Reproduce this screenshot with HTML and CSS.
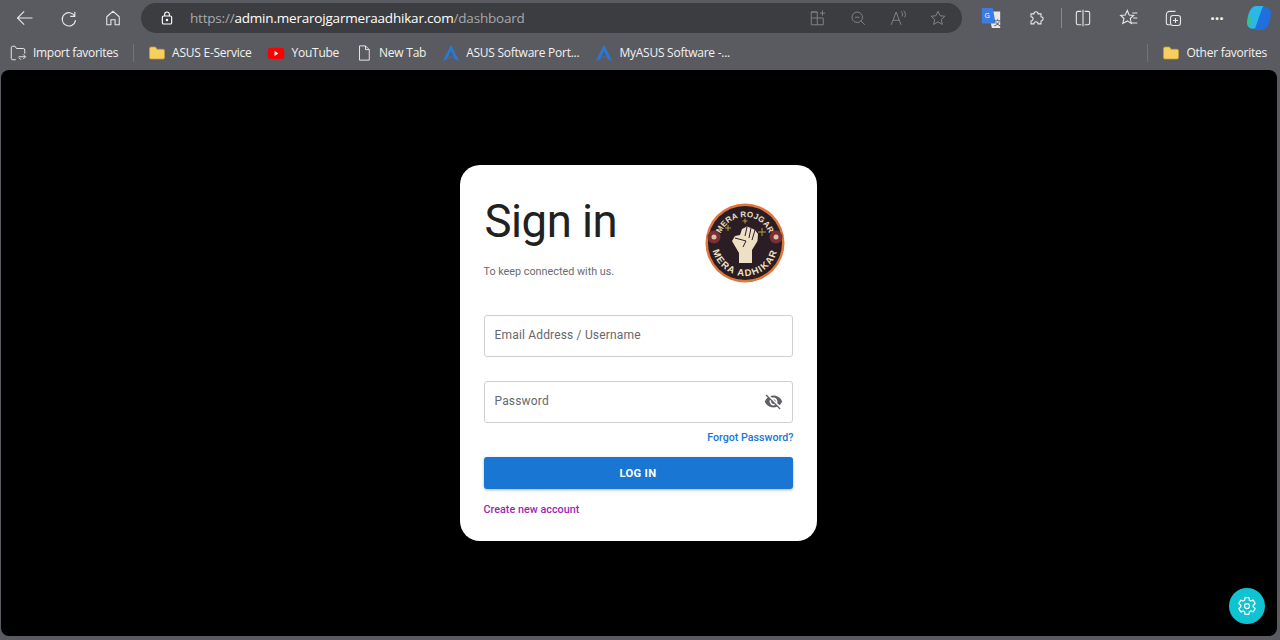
FILE: index.html
```html
<!DOCTYPE html>
<html lang="en">

<head>
  <meta charset="UTF-8">
  <meta name="viewport" content="width=device-width, initial-scale=1.0">
  <title>Sign in</title>
  <link rel="stylesheet" href="styles.css">
</head>

<body>
  <header class="toolbar">
    <div class="nav-buttons">
      <svg class="icon" viewBox="0 0 24 24"><path d="M21 12H3M11 4 3 12l8 8" /></svg>
      <svg class="icon" viewBox="0 0 24 24"><path d="M19 4.500V10h-5.500M19 10a8 8 0 1 0 .8 4.500" /></svg>
      <svg class="icon" viewBox="0 0 24 24"><path d="M4.500 10.500 12 4l7.500 6.500V20h-5v-6h-5v6h-5z" /></svg>
    </div>
    <div class="address">
      <svg class="icon lock" viewBox="0 0 24 24"><rect x="5" y="9" width="14" height="12" rx="2" /><path d="M8.500 9V6.500a3.500 3.500 0 0 1 7 0V9" /><circle cx="12" cy="15" r="1" /></svg>
      <span class="url">https://<b>admin.merarojgarmeraadhikar.com</b>/dashboard</span>
      <div class="address-tools">
        <svg class="icon" viewBox="0 0 24 24"><path d="M3 12h16v9H3zM11 4v17M3 12V4h8M3 4h8M18 2v7M14.500 5.500h7" /></svg>
        <svg class="icon" viewBox="0 0 24 24"><circle cx="11" cy="11" r="7" /><path d="M16 16l5 5M8 11h6" /></svg>
        <svg class="icon" viewBox="0 0 24 24"><path d="M3 21 9.500 4 16 21M5.500 15h8M16 3c2 1.500 2.500 4.500 1.500 7M19.500 2c2.500 2 3 6 1.500 9" /></svg>
        <svg class="icon" viewBox="0 0 24 24"><path d="m12 3 2.800 6 6.400.7-4.800 4.300 1.400 6.500-5.800-3.300-5.800 3.300L7.600 14 2.800 9.700 9.200 9z" /></svg>
      </div>
    </div>
    <div class="ext-buttons">
      <svg class="ext translate" viewBox="0 0 24 24">
        <path class="tr-back" d="M9 5h13v18H13z" />
        <path class="tr-front" d="M2 1h12l3 17H2z" />
        <text x="5" y="12" class="tr-g">G</text>
        <text x="15" y="20" class="tr-z">文</text>
      </svg>
      <svg class="icon" viewBox="0 0 24 24"><path d="M6 7h3.500a2.500 2.500 0 1 1 5 0H18v3.500a2.500 2.500 0 1 1 0 5V19h-3.500a2.500 2.500 0 1 0-5 0H6v-3.500a2.500 2.500 0 1 0 0-5z" /></svg>
      <span class="divider"></span>
      <svg class="icon" viewBox="0 0 24 24"><path d="M10 4H6a2 2 0 0 0-2 2v12a2 2 0 0 0 2 2h4M14 4h4a2 2 0 0 1 2 2v12a2 2 0 0 1-2 2h-4M12 2v20" /></svg>
      <svg class="icon fav" viewBox="0 0 24 24"><path d="m10 3 2.200 5.500 5.300.4-4 3.700 1.200 5.900-4.700-3-5.500 3 1.500-5.900-4-3.700 5.500-.4zM16 6h6M17 12h5M15 18h7" /></svg>
      <svg class="icon" viewBox="0 0 24 24"><path d="M9 20H6a2 2 0 0 1-2-2V8a4 4 0 0 1 4-4h7" /><rect x="9" y="9" width="12" height="12" rx="3" /><path d="M15 12v6M12 15h6" /></svg>
      <span class="dots">···</span>
      <svg class="ext copilot" viewBox="0 0 24 24">
        <path fill="#2bb7e8" d="M9 1h7L9 21c-1 2-8 1-8-4C1 10 4 1 9 1z" />
        <path fill="#1f6fe0" d="M15 23H8l7-20c1-2 8-1 8 4 0 7-3 16-8 16z" />
        <path fill="#35c48d" d="M2 11l4-1-2 9-3-2z" />
      </svg>
    </div>
  </header>

  <nav class="bookmarks">
    <a class="bookmark tight">
      <svg class="icon" viewBox="0 0 24 24"><path d="M9 21H5a2 2 0 0 1-2-2V5a2 2 0 0 1 2-2h3l2 3h9a2 2 0 0 1 2 2v5M13 17h9M19 14l3 3-3 3M16 21l-3-3" /></svg>
      Import favorites
    </a>
    <span class="bookmark-divider"></span>
    <a class="bookmark">
      <svg class="folder" viewBox="0 0 24 24"><path d="M2 6a2 2 0 0 1 2-2h6l2 3h8a2 2 0 0 1 2 2v9a2 2 0 0 1-2 2H4a2 2 0 0 1-2-2z" /></svg>
      ASUS E-Service
    </a>
    <a class="bookmark">
      <svg class="site" viewBox="0 0 24 24"><rect x="1" y="5" width="22" height="15" rx="4" fill="#f00" /><path d="m10 9 5 3.500-5 3.500z" fill="#fff" /></svg>
      YouTube
    </a>
    <a class="bookmark">
      <svg class="icon" viewBox="0 0 24 24"><path d="M6 2.500h8l5 5V21.500H6zM14 2.500v5h5" /></svg>
      New Tab
    </a>
    <a class="bookmark">
      <svg class="site" viewBox="0 0 24 24"><path d="M12 1 1 23l11-6 11 6zM12 9l-5 10 5-3 5 3z" fill="#2a78d8" fill-rule="evenodd" /></svg>
      ASUS Software Port...
    </a>
    <a class="bookmark">
      <svg class="site" viewBox="0 0 24 24"><path d="M12 1 1 23l11-6 11 6zM12 9l-5 10 5-3 5 3z" fill="#2a78d8" fill-rule="evenodd" /></svg>
      MyASUS Software -...
    </a>
    <span class="bookmark-divider push"></span>
    <a class="bookmark">
      <svg class="folder" viewBox="0 0 24 24"><path d="M2 6a2 2 0 0 1 2-2h6l2 3h8a2 2 0 0 1 2 2v9a2 2 0 0 1-2 2H4a2 2 0 0 1-2-2z" /></svg>
      Other favorites
    </a>
  </nav>

  <main class="page">
    <section class="card">
      <div class="card-head">
        <div>
          <h1 class="title">Sign in</h1>
          <p class="subtitle">To keep connected with us.</p>
        </div>
        <svg class="logo" viewBox="0 0 80 80">
          <defs>
            <path id="logo-top" d="M14 40A26 26 0 0 1 66 40" />
            <path id="logo-bottom" d="M7 40A33 33 0 0 0 73 40" />
          </defs>
          <circle cx="40" cy="40" r="39.500" fill="#e0763a" />
          <circle cx="40" cy="40" r="37" fill="#2a1d24" />
          <text class="logo-text"><textPath href="#logo-top" startOffset="50%">MERA ROJGAR</textPath></text>
          <text class="logo-text big"><textPath href="#logo-bottom" startOffset="50%">MERA ADHIKAR</textPath></text>
          <path class="fist" d="M34 60V50L27 38l3-5 5-1 2-6 5-2.500 4 1.500 4 2 3 4-.5 7L47 47v13z" />
          <path class="fist-lines" d="M42 24l-2 9M46 25l-2 10M50 27l-3 10M30 35l11 3-3 6" />
          <circle class="badge" cx="9" cy="34" r="6.500" />
          <circle class="badge" cx="71" cy="34" r="6.500" />
          <circle class="badge-head" cx="9" cy="34" r="2.500" />
          <circle class="badge-head" cx="71" cy="34" r="2.500" />
          <path class="star" d="M23 22v6M20 25h6M40 15.500v5M37.500 18h5M57 25v8M53 29h8" />
        </svg>
      </div>

      <div class="field first">
        <span class="placeholder">Email Address / Username</span>
      </div>
      <div class="field">
        <span class="placeholder">Password</span>
        <svg class="eye" viewBox="0 0 24 24"><path d="M12 7c2.760 0 5 2.240 5 5 0 .65-.13 1.260-.36 1.830l2.920 2.920c1.510-1.260 2.700-2.890 3.430-4.750-1.730-4.390-6-7.500-11-7.500-1.400 0-2.740.25-3.980.7l2.160 2.160C10.740 7.130 11.350 7 12 7zM2 4.270l2.280 2.280.46.460C3.080 8.300 1.780 10.020 1 12c1.730 4.390 6 7.500 11 7.500 1.550 0 3.030-.3 4.380-.84l.42.420L19.730 22 21 20.730 3.270 3 2 4.270zM7.530 9.800l1.550 1.550c-.05.21-.08.430-.08.650 0 1.660 1.340 3 3 3 .22 0 .44-.03.650-.08l1.550 1.550c-.67.330-1.410.53-2.200.53-2.760 0-5-2.240-5-5 0-.79.200-1.530.53-2.200zm4.310-.780 3.150 3.150.020-.160c0-1.660-1.340-3-3-3l-.170.010z" /></svg>
      </div>
      <a class="forgot">Forgot Password?</a>
      <button class="login" type="button">LOG IN</button>
      <a class="create">Create new account</a>
    </section>

    <button class="settings" type="button">
      <svg viewBox="0 0 24 24"><path d="M19.430 12.980c.04-.32.070-.64.070-.98 0-.34-.03-.66-.07-.98l2.110-1.650c.19-.15.240-.42.120-.64l-2-3.460c-.12-.22-.39-.3-.61-.22l-2.490 1c-.52-.4-1.080-.73-1.690-.98l-.38-2.650C14.460 2.180 14.250 2 14 2h-4c-.25 0-.46.180-.49.420l-.38 2.650c-.61.250-1.170.59-1.690.98l-2.490-1c-.23-.09-.49 0-.61.220l-2 3.460c-.13.220-.07.490.12.640l2.110 1.650c-.04.320-.07.650-.07.980 0 .33.030.66.070.98l-2.110 1.650c-.19.150-.24.420-.12.640l2 3.460c.12.220.39.300.61.220l2.490-1c.52.400 1.080.730 1.690.980l.38 2.650c.03.240.24.420.49.420h4c.25 0 .46-.18.49-.42l.38-2.650c.61-.25 1.170-.59 1.690-.98l2.490 1c.23.090.49 0 .61-.22l2-3.460c.12-.22.070-.49-.12-.64l-2.110-1.650z" /><circle cx="12" cy="12" r="3" /></svg>
    </button>
  </main>
</body>

</html>
```
FILE: styles.css
```css
* {
  box-sizing: border-box;
  padding: 0;
  margin: 0;
}

html,
body {
  height: 100%;
}

body {
  display: flex;
  flex-direction: column;
  overflow: hidden;
  background-color: #5a5b60;
  font-family: 'Open Sans', sans-serif;
  color: #f2f2f2;
}

.icon {
  width: 20px;
  height: 20px;
  flex-shrink: 0;
  fill: none;
  stroke: #e8e8e8;
  stroke-width: 1.3;
}

/* browser toolbar */
.toolbar {
  display: flex;
  align-items: center;
  height: 35px;
  padding-top: 1px;
}

.nav-buttons {
  display: flex;
  gap: 24px;
  padding-left: 15px;
  width: 141px;
}

.address {
  display: flex;
  align-items: center;
  width: 821px;
  height: 30px;
  padding: 0 15px 0 18px;
  border-radius: 15px;
  background-color: #3c3d41;
}

.lock {
  width: 16px;
  height: 16px;
  margin-right: 15px;
  stroke: #fff;
  stroke-width: 1.7;
}

.url {
  font-size: 13.5px;
  color: #a8a9ab;
  letter-spacing: -0.2px;
}

.url b {
  font-weight: 400;
  color: #fff;
}

.address-tools {
  display: flex;
  gap: 22px;
  margin-left: auto;
}

.address-tools .icon {
  stroke: #828386;
  width: 18px;
  height: 18px;
}

.ext-buttons {
  display: flex;
  align-items: center;
  flex: 1;
  padding-left: 18px;
  gap: 24px;
}

.ext {
  width: 22px;
  height: 22px;
  flex-shrink: 0;
}

.tr-back {
  fill: #e8e8e8;
}

.tr-front {
  fill: #3f7be0;
}

.tr-g {
  font-size: 8px;
  fill: #fff;
}

.tr-z {
  font-size: 8px;
  fill: #444;
  font-family: 'Noto Sans CJK SC', sans-serif;
}

.divider {
  width: 1px;
  height: 20px;
  margin: 0 -13px 0 -9px;
  background-color: #88898c;
}

.fav {
  margin-left: 2px;
}

.dots {
  width: 20px;
  font-size: 16px;
  font-weight: 700;
  text-align: center;
}

.copilot {
  margin-left: -5px;
  width: 26px;
  height: 26px;
}

/* favorites bar */
.bookmarks {
  display: flex;
  align-items: center;
  height: 35px;
  padding: 0 13px 0 9px;
  font-size: 12px;
}

.bookmark {
  display: flex;
  align-items: center;
  gap: 6px;
  margin-right: 16px;
  white-space: nowrap;
  letter-spacing: -0.25px;
}

.bookmark.tight {
  margin-right: 15px;
  letter-spacing: -0.3px;
}

.bookmark:last-child {
  margin-right: 0;
}

.bookmark .icon {
  width: 18px;
  height: 18px;
}

.bookmark-divider {
  width: 1px;
  height: 18px;
  margin-right: 14px;
  background-color: #727377;
}

.push {
  margin-left: auto;
}

.folder {
  width: 18px;
  height: 18px;
  fill: #f6cf5f;
  stroke: #c79a34;
  stroke-width: 1;
}

.site {
  width: 18px;
  height: 18px;
}

/* page */
.page {
  position: relative;
  display: flex;
  flex-direction: column;
  align-items: center;
  height: 566px;
  margin: 0 3px 0 1px;
  padding: 95px 2px 0 0;
  border-radius: 8px;
  background-color: #000;
  font-family: Roboto, sans-serif;
}

.card {
  display: flex;
  flex-direction: column;
  width: 357px;
  height: 376px;
  padding: 24px;
  border-radius: 20px;
  background-color: #fff;
}

.card-head {
  display: flex;
  justify-content: space-between;
  height: 126px;
}

.title {
  margin: 1px 0 0 1px;
  font-size: 45.5px;
  font-weight: 400;
  line-height: 64px;
  color: #212121;
  letter-spacing: -0.5px;
}

.subtitle {
  margin-top: 11px;
  font-size: 10.8px;
  color: #6b6b70;
}

.logo {
  width: 80px;
  height: 80px;
  margin-top: 14px;
  margin-right: 8px;
}

.logo-text {
  font-family: 'Liberation Sans', sans-serif;
  font-size: 8px;
  font-weight: 700;
  letter-spacing: 0.2px;
  text-anchor: middle;
  fill: #eee0c4;
}

.logo-text.big {
  font-size: 9.5px;
  letter-spacing: 1.2px;
}

.fist {
  fill: #eee0c4;
}

.fist-lines {
  fill: none;
  stroke: #2a1d24;
}

.badge {
  fill: #7c3036;
}

.badge-head {
  fill: #d9c3a8;
}

.star {
  fill: none;
  stroke: #d8b64a;
  stroke-width: 0.8;
}

.field {
  display: flex;
  justify-content: space-between;
  align-items: center;
  height: 42px;
  margin-top: 24px;
  padding: 0 9px 0 10px;
  border: 1px solid #cfcfd2;
  border-radius: 3px;
}

.field.first {
  margin-top: 0;
}

.placeholder {
  margin-top: -3px;
  font-size: 12px;
  color: #67676c;
  letter-spacing: 0.17px;
}

.eye {
  width: 19px;
  height: 19px;
  margin-top: -2px;
  fill: #5f6064;
}

.forgot {
  align-self: flex-end;
  margin: 8px -1px 0 0;
  font-size: 10.7px;
  font-weight: 500;
  line-height: 14px;
  color: #1976d2;
}

.login {
  height: 32px;
  margin-top: 12px;
  border: none;
  border-radius: 3px;
  background-color: #1976d2;
  box-shadow: 0 1px 3px rgba(0, 0, 0, 0.3);
  font-family: Roboto, sans-serif;
  font-size: 11.2px;
  font-weight: 700;
  letter-spacing: 0.3px;
  color: #fff;
}

.create {
  margin-top: 14px;
  font-size: 10.8px;
  font-weight: 500;
  line-height: 14px;
  color: #9c27b0;
}

.settings {
  position: absolute;
  right: 12px;
  bottom: 12px;
  display: flex;
  align-items: center;
  justify-content: center;
  width: 36px;
  height: 36px;
  border: none;
  border-radius: 50%;
  background-color: #10c3d3;
}

.settings svg {
  width: 20px;
  height: 20px;
  fill: none;
  stroke: #fff;
  stroke-width: 1.5;
}
```
